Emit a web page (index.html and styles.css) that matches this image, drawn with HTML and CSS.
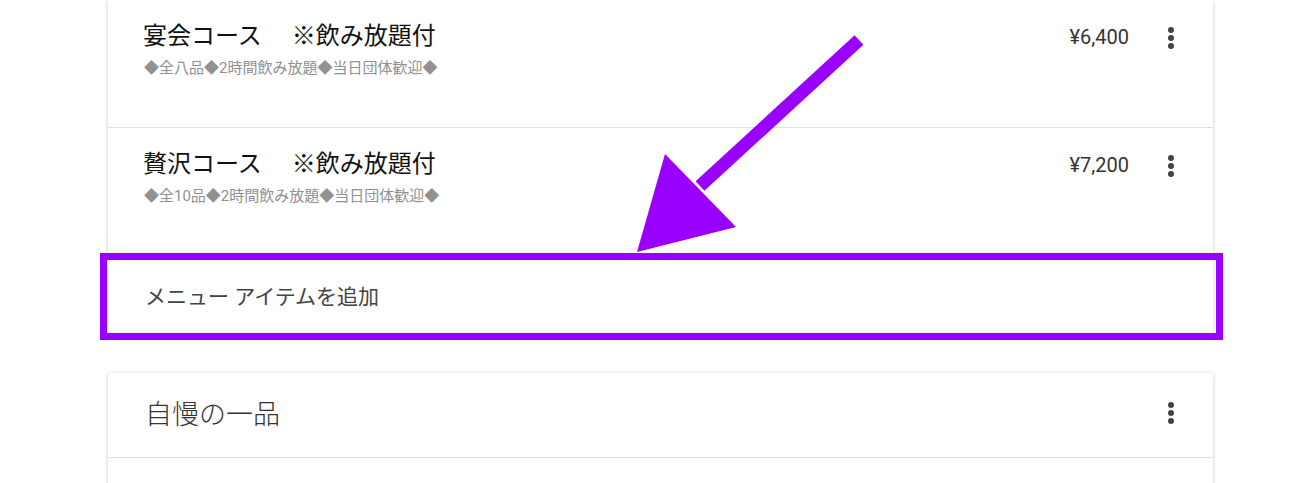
FILE: index.html
```html
<!DOCTYPE html>
<html lang="ja">
<head>
    <meta charset="UTF-8">
    <meta name="viewport" content="width=device-width, initial-scale=1.0">
    <title>メニュー</title>
    <link rel="stylesheet" href="styles.css">
</head>
<body>
    <div class="page">
        <!-- コース -->
        <div class="card">
            <div class="item">
                <div class="item-text">
                    <div class="item-title">宴会コース　 ※飲み放題付</div>
                    <div class="item-desc">◆全八品◆2時間飲み放題◆当日団体歓迎◆</div>
                </div>
                <div class="item-price">¥6,400</div>
                <div class="kebab"><span></span><span></span><span></span></div>
            </div>
            <div class="item">
                <div class="item-text">
                    <div class="item-title">贅沢コース　 ※飲み放題付</div>
                    <div class="item-desc">◆全10品◆2時間飲み放題◆当日団体歓迎◆</div>
                </div>
                <div class="item-price">¥7,200</div>
                <div class="kebab"><span></span><span></span><span></span></div>
            </div>
            <div class="add-item">メニュー アイテムを追加</div>
        </div>

        <!-- 自慢の一品 -->
        <div class="card">
            <div class="section-head">
                <div class="section-title">自慢の一品</div>
                <div class="kebab"><span></span><span></span><span></span></div>
            </div>
            <div class="item item-empty"></div>
        </div>
    </div>

    <!-- 注釈 -->
    <div class="highlight"></div>
    <svg class="arrow" width="1302" height="483" viewBox="0 0 1302 483">
        <line x1="859" y1="40" x2="700" y2="186" stroke="#9900ff" stroke-width="13"/>
        <polygon points="665,154 736,227 637,252" fill="#9900ff"/>
    </svg>
</body>
</html>
```

FILE: styles.css
```css
body {
    margin: 0;
    background: #ffffff;
    font-family: Roboto, "Noto Sans CJK JP", sans-serif;
    color: #212121;
    overflow: hidden;
}
.page {
    padding-left: 108px;
    width: 1105px;
}
.card {
    background: #fff;
    box-shadow: 0 1px 4px rgba(0, 0, 0, 0.22);
    margin-bottom: 40px;
}
.item {
    display: flex;
    align-items: flex-start;
    height: 128px;
    box-sizing: border-box;
    border-bottom: 1px solid #e0e0e0;
    padding: 21px 30px 0 35px;
}
.item-text {
    flex: 1;
}
.item-title {
    font-size: 24px;
    line-height: 30px;
    color: #111;
}
.item-desc {
    margin-top: 7px;
    margin-left: 1px;
    font-size: 15px;
    line-height: 20px;
    color: #919191;
}
.item-price {
    font-size: 20px;
    line-height: 30px;
    color: #333;
    margin-right: 30px;
    margin-top: 1px;
}
.kebab {
    width: 24px;
    height: 30px;
    display: flex;
    flex-direction: column;
    align-items: center;
    justify-content: center;
    gap: 2px;
    margin-top: 2px;
}
.kebab span {
    width: 6px;
    height: 6px;
    border-radius: 50%;
    background: #444;
}
.add-item {
    height: 77px;
    box-sizing: border-box;
    padding: 27px 0 0 37px;
    font-size: 21px;
    line-height: 28px;
    color: #444;
}
.section-head {
    display: flex;
    align-items: flex-start;
    height: 85px;
    box-sizing: border-box;
    border-bottom: 1px solid #e0e0e0;
    padding: 24px 30px 0 37px;
}
.section-title {
    flex: 1;
    font-size: 27px;
    line-height: 36px;
    font-weight: 300;
    color: #333;
}
.section-head .kebab {
    margin-top: 1px;
}
.item-empty {
    border-bottom: none;
}
.highlight {
    position: absolute;
    left: 100px;
    top: 253px;
    width: 1123px;
    height: 87px;
    box-sizing: border-box;
    border: 7px solid #9900ff;
}
.arrow {
    position: absolute;
    left: 0;
    top: 0;
}
```
